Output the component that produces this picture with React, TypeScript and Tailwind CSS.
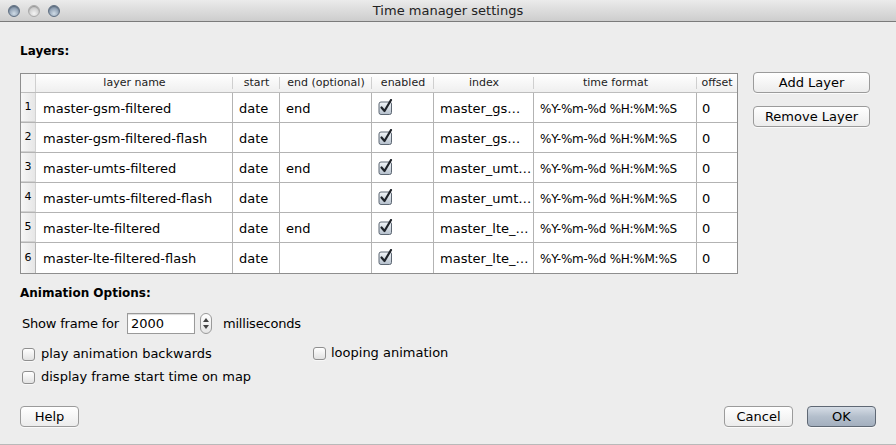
import type { JSX } from 'react'

interface LayerRow {
  name: string
  start: string
  end: string
  index: string
  format: string
  offset: string
}

const ROWS: LayerRow[] = [
  { name: 'master-gsm-filtered', start: 'date', end: 'end', index: 'master_gs…', format: '%Y-%m-%d %H:%M:%S', offset: '0' },
  { name: 'master-gsm-filtered-flash', start: 'date', end: '', index: 'master_gs…', format: '%Y-%m-%d %H:%M:%S', offset: '0' },
  { name: 'master-umts-filtered', start: 'date', end: 'end', index: 'master_umt…', format: '%Y-%m-%d %H:%M:%S', offset: '0' },
  { name: 'master-umts-filtered-flash', start: 'date', end: '', index: 'master_umt…', format: '%Y-%m-%d %H:%M:%S', offset: '0' },
  { name: 'master-lte-filtered', start: 'date', end: 'end', index: 'master_lte_…', format: '%Y-%m-%d %H:%M:%S', offset: '0' },
  { name: 'master-lte-filtered-flash', start: 'date', end: '', index: 'master_lte_…', format: '%Y-%m-%d %H:%M:%S', offset: '0' },
]

// column widths measured from the grid lines
const COL = {
  num: 'w-[15px]',
  name: 'w-[197px]',
  start: 'w-[47px]',
  end: 'w-[92px]',
  enabled: 'w-[62px]',
  index: 'w-[100px]',
  format: 'w-[163px]',
  offset: 'flex-1',
}

function Light({ dim }: { dim?: boolean }): JSX.Element {
  return (
    <div
      className={`w-[12px] h-[12px] rounded-full border ${
        dim
          ? 'border-[#a9a9a9] bg-[radial-gradient(circle_at_50%_75%,#f4f4f4,#c4c4c4_75%)]'
          : 'border-[#5f6f82] bg-[radial-gradient(circle_at_50%_75%,#cfdbe6,#7c8ea3_75%)]'
      } shadow-[inset_0_1px_1px_rgba(0,0,0,0.25)]`}
    />
  )
}

function Checked(): JSX.Element {
  return (
    <svg width="15" height="16" viewBox="0 0 15 16" aria-hidden="true">
      <defs>
        <linearGradient id="cbfill" x1="0" y1="0" x2="0" y2="1">
          <stop offset="0" stopColor="#f2f5f8" />
          <stop offset="1" stopColor="#b4bfcb" />
        </linearGradient>
      </defs>
      <rect x="1" y="3" width="12.5" height="12.5" rx="2" fill="url(#cbfill)" stroke="#5d6773" />
      <path d="M3.5 8.5 L6.5 12 L13 1" fill="none" stroke="#1f2329" strokeWidth="2.2" strokeLinecap="round" strokeLinejoin="round" />
    </svg>
  )
}

function Box(): JSX.Element {
  return (
    <div className="w-[13px] h-[13px] rounded-[3px] border border-[#8f8f8f] bg-gradient-to-b from-white to-[#e2e2e2] shadow-[0_1px_0_rgba(255,255,255,0.6)]" />
  )
}

function Button({ label, wide, primary }: { label: string; wide?: string; primary?: boolean }): JSX.Element {
  return (
    <button
      className={`${wide ?? ''} h-[21px] rounded-[4px] border text-[13px] leading-none ${
        primary
          ? 'border-[#5f6874] bg-gradient-to-b from-[#d6dde6] via-[#b4bfcc] to-[#a3afbe] text-black'
          : 'border-[#9b9b9b] bg-gradient-to-b from-white to-[#ececec] text-black'
      } shadow-[0_1px_0_rgba(255,255,255,0.7)]`}
    >
      {label}
    </button>
  )
}

function HeaderCell({ w, label, last }: { w: string; label: string; last?: boolean }): JSX.Element {
  return (
    <div className={`${w} flex items-center justify-center relative text-[11px] text-[#222]`}>
      {label}
      {!last && <span className="absolute right-0 top-[3px] bottom-[3px] w-px bg-[#cfcfcf]" />}
    </div>
  )
}

export default function App(): JSX.Element {
  return (
    <div className="w-[896px] h-[445px] bg-[#ededed] flex flex-col overflow-hidden border-b border-[#b9b9b9] font-['DejaVu_Sans',sans-serif] text-black">
      {/* Title bar */}
      <div className="h-[22px] flex items-center relative bg-gradient-to-b from-[#ebebeb] to-[#cdcdcd] border-b border-[#7b7b7b]">
        <div className="flex gap-[8px] pl-[8px]">
          <Light />
          <Light dim />
          <Light />
        </div>
        <div className="absolute inset-0 flex items-center justify-center text-[13px] text-[#222] pointer-events-none">
          Time manager settings
        </div>
      </div>

      <div className="flex-1 flex flex-col px-[20px]">
        <div className="mt-[21px] h-[16px] leading-[16px] font-bold text-[12px]">Layers:</div>

        <div className="mt-[14px] flex items-start">
          {/* Table */}
          <div className="w-[718px] h-[201px] border border-[#8e8e8e] bg-white flex flex-col">
            <div className="h-[19px] flex bg-gradient-to-b from-white to-[#efefef] border-b border-[#bdbdbd]">
              <div className={`${COL.num} border-r border-[#cfcfcf] bg-[#f4f4f4]`} />
              <HeaderCell w={COL.name} label="layer name" />
              <HeaderCell w={COL.start} label="start" />
              <HeaderCell w={COL.end} label="end (optional)" />
              <HeaderCell w={COL.enabled} label="enabled" />
              <HeaderCell w={COL.index} label="index" />
              <HeaderCell w={COL.format} label="time format" />
              <HeaderCell w={COL.offset} label="offset" last />
            </div>
            {ROWS.map((r, i) => (
              <div key={i} className={`h-[30px] flex text-[13px] ${i < ROWS.length - 1 ? 'border-b border-[#b3b3b3]' : ''}`}>
                <div className={`${COL.num} flex items-center justify-center text-[11px] bg-gradient-to-r from-[#f7f7f7] to-[#e6e6e6] border-r border-[#b3b3b3] ${i < ROWS.length - 1 ? 'border-b border-[#d2d2d2]' : ''}`}>
                  {i + 1}
                </div>
                <div className={`${COL.name} flex items-center pl-[7px] pt-[2px] border-r border-[#b3b3b3] whitespace-nowrap`}>{r.name}</div>
                <div className={`${COL.start} flex items-center pl-[6px] pt-[2px] border-r border-[#b3b3b3]`}>{r.start}</div>
                <div className={`${COL.end} flex items-center pl-[6px] pt-[2px] border-r border-[#b3b3b3]`}>{r.end}</div>
                <div className={`${COL.enabled} flex items-center pl-[6px] pb-[2px] border-r border-[#b3b3b3]`}>
                  <Checked />
                </div>
                <div className={`${COL.index} flex items-center pl-[6px] pt-[2px] border-r border-[#b3b3b3] whitespace-nowrap overflow-hidden`}>{r.index}</div>
                <div className={`${COL.format} flex items-center pl-[6px] pt-[2px] text-[12px] tracking-[-0.25px] border-r border-[#b3b3b3] whitespace-nowrap`}>{r.format}</div>
                <div className={`${COL.offset} flex items-center pl-[5px] pt-[2px]`}>{r.offset}</div>
              </div>
            ))}
          </div>

          {/* Side buttons */}
          <div className="ml-[15px] mt-[-1px] flex flex-col gap-[13px]">
            <Button label="Add Layer" wide="w-[117px]" />
            <Button label="Remove Layer" wide="w-[117px]" />
          </div>
        </div>

        <div className="mt-[11px] h-[16px] leading-[16px] font-bold text-[12px]">Animation Options:</div>

        <div className="mt-[12px] h-[21px] flex items-center text-[13px] pl-[2px]">
          <span className="tracking-[-0.2px]">Show frame for</span>
          <div className="ml-[8px] w-[68px] h-[21px] border border-[#9a9a9a] bg-white flex items-center pl-[3px] shadow-[inset_0_1px_1px_rgba(0,0,0,0.15)]">
            2000
          </div>
          <div className="ml-[5px] w-[12px] h-[21px] rounded-[6px] border border-[#9a9a9a] bg-gradient-to-b from-white to-[#e6e6e6] flex flex-col items-center justify-center gap-[3px]">
            <svg width="6" height="4" viewBox="0 0 6 4" aria-hidden="true"><path d="M0 4 L3 0 L6 4 Z" fill="#444" /></svg>
            <svg width="6" height="4" viewBox="0 0 6 4" aria-hidden="true"><path d="M0 0 L3 4 L6 0 Z" fill="#444" /></svg>
          </div>
          <span className="ml-[11px] tracking-[-0.2px]">milliseconds</span>
        </div>

        <div className="mt-[10px] grid grid-cols-[291px_1fr] gap-y-[3px] text-[13px] pl-[2px]">
          <label className="h-[20px] flex items-center gap-[6px]">
            <Box />
            play animation backwards
          </label>
          <label className="h-[20px] flex items-center gap-[5px] mt-[-1px]">
            <Box />
            looping animation
          </label>
          <label className="h-[20px] flex items-center gap-[6px]">
            <Box />
            display frame start time on map
          </label>
        </div>

        <div className="mt-[19px] flex items-center">
          <Button label="Help" wide="w-[59px]" />
          <div className="flex-1" />
          <Button label="Cancel" wide="w-[69px]" />
          <div className="w-[14px]" />
          <Button label="OK" wide="w-[69px]" primary />
        </div>
      </div>
    </div>
  )
}
